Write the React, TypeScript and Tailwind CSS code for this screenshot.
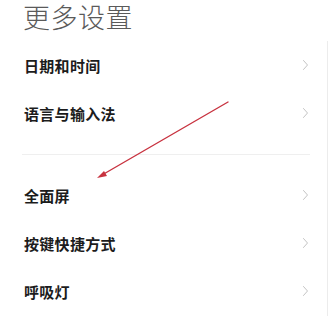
import React from "react";

const Chevron = () => (
  <svg width="7" height="12" viewBox="0 0 7 12" fill="none">
    <path d="M1.5 1.5 L5.5 6 L1.5 10.5" stroke="#c4c4c4" strokeWidth="1" strokeLinecap="round" strokeLinejoin="round" />
  </svg>
);

const Row = ({ label }: { label: string }) => (
  <div className="h-[48px] flex items-center justify-between pl-[24px] pr-[18px]">
    <span className="text-[15px] font-bold text-[#1c1c1c] leading-none tracking-[0.3px]">{label}</span>
    <Chevron />
  </div>
);

export default function App() {
  return (
    <div
      className="relative w-[332px] h-[316px] bg-white overflow-hidden"
      style={{ fontFamily: '"Noto Sans CJK SC", "Noto Sans", sans-serif' }}
    >
      <div className="h-[41px] pl-[23px] pt-[3px]">
        <div className="text-[27px] leading-[28px] font-light text-[#5a5a5a] tracking-[0.5px]">更多设置</div>
      </div>
      <div className="w-[328px] border-r border-[#ececec] h-[275px]">
        <Row label="日期和时间" />
        <Row label="语言与输入法" />
        <div className="h-[34px] flex items-center pl-[22px] pr-[17px]">
          <div className="h-px w-full bg-[#efefef]" />
        </div>
        <Row label="全面屏" />
        <Row label="按键快捷方式" />
        <Row label="呼吸灯" />
      </div>
      <svg className="absolute left-0 top-0 pointer-events-none" width="332" height="316">
        <line x1="228" y1="102" x2="102" y2="175" stroke="#c8323f" strokeWidth="1.4" strokeLinecap="round" />
        <polygon points="97,178 104,171 107,176" fill="#c8323f" />
      </svg>
    </div>
  );
}
